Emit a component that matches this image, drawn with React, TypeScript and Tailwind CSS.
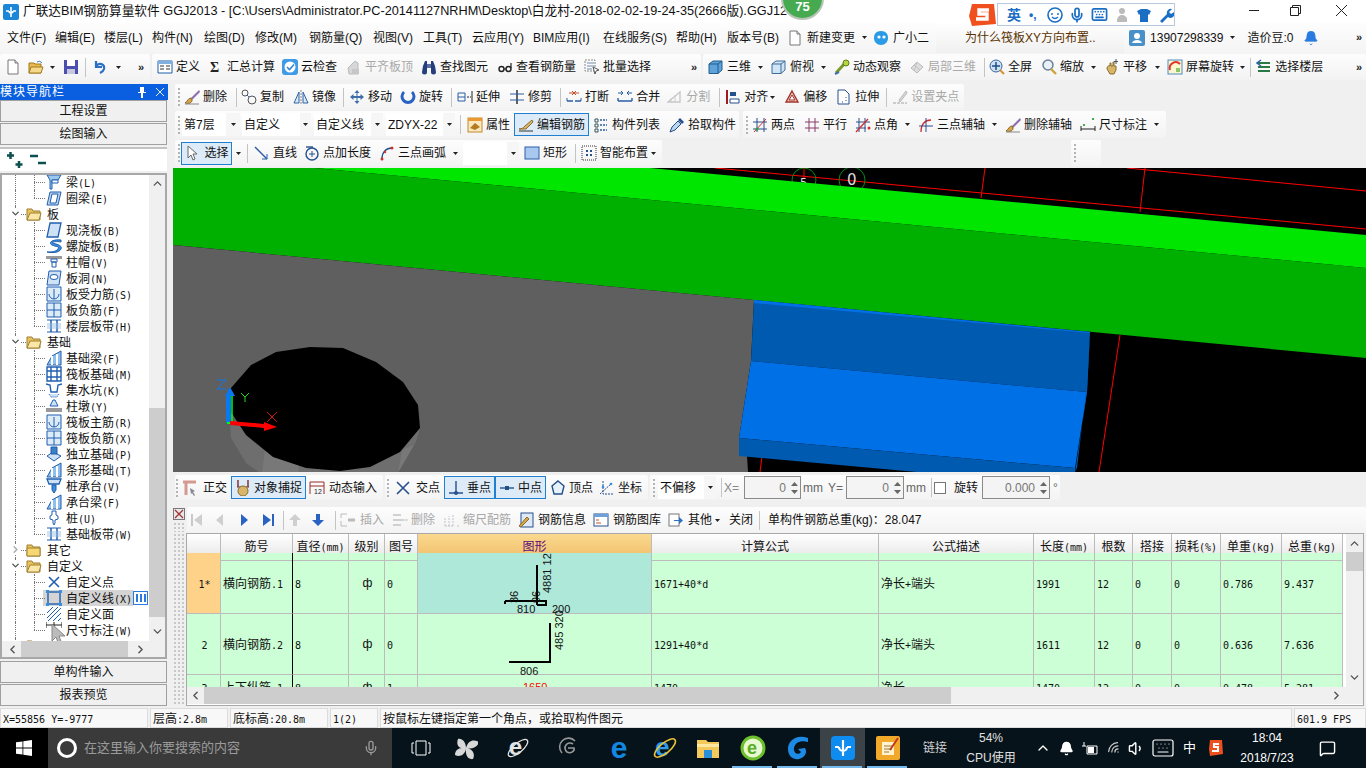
import React from 'react';
import clsx from 'clsx';
import { ChevronDown, ChevronLeft, ChevronRight, ChevronUp, Mic, Bell, Wifi, Volume1, Keyboard, MessageSquare } from 'lucide-react';

const sans = "[font-family:'Liberation_Sans','Noto_Sans_CJK_SC',sans-serif]";

// CJK runs at 12px with half-width latin next to them, like the app's bitmap font
const Sim = ({ t, className }: { t: string; className?: string }) => (
  <span className={clsx('whitespace-nowrap', className)}>
    {t.split(/([\u4e00-\u9fff，]+)/).filter(Boolean).map((p, i) =>
      /[\u4e00-\u9fff，]/.test(p)
        ? <span key={i} className="text-[12px]">{p}</span>
        : <span key={i} className="text-[10px] [font-family:'DejaVu_Sans_Mono',monospace]">{p}</span>
    )}
  </span>
);

const S = ({ children, w = 16, h = 16 }: { children: React.ReactNode; w?: number; h?: number }) => (
  <svg width={w} height={h} viewBox={`0 0 ${w} ${h}`} className="shrink-0">{children}</svg>
);

const icons: Record<string, React.ReactNode> = {
  file: <><path d="M3 1h7l3 3v11H3z" fill="#fff" stroke="#777" /><path d="M10 1v3h3" fill="#ddd" stroke="#777" /></>,
  open: <><path d="M1 4h5l1 1h6v9H1z" fill="#e8b94c" stroke="#a37a1e" /><path d="M3 8h12l-2 6H1z" fill="#f5d98a" stroke="#a37a1e" /><path d="M9 3q3-2 5 1" fill="none" stroke="#3a7fd0" /></>,
  save: <><path d="M1 1h14v14H1z" fill="#4a4fb0" /><path d="M4 1h8v6H4z" fill="#fff" /><path d="M4 10h8v5H4z" fill="#c8c8dc" /></>,
  undo: <path d="M4 2v6h6M4 7c3-4 9-2 8 3-.5 2-2 3-4 4" fill="none" stroke="#2a6fc4" strokeWidth="2.2" />,
  table: <><path d="M1 2h14v12H1z" fill="#fff" stroke="#1f5fa8" /><path d="M1 2h14v3H1z" fill="#7fb0e0" /><path d="M3 7h4M3 10h4M9 7h4M9 10h4" stroke="#333" /></>,
  sigma: <text x="2" y="13" fontSize="14" fontWeight="700" fontFamily="Liberation Serif" fill="#222">Σ</text>,
  cloud: <><rect x="0" y="0" width="16" height="16" rx="3" fill="#3f9be6" /><circle cx="8" cy="8" r="5.5" fill="#fff" /><path d="M5 8l2.5 2.5L12 5.5" fill="none" stroke="#2f86d6" strokeWidth="1.6" /></>,
  flat: <><path d="M2 9l7-7 3 2v11H3z" fill="#d6d6d6" stroke="#bbb" /><path d="M6 10h7v5H6z" fill="#c6c6c6" /></>,
  binoc: <><path d="M2 7l2-5h2v11a2.5 2.5 0 01-5 0zM14 7l-2-5h-2v11a2.5 2.5 0 005 0z" fill="#24407c" /><path d="M6 5h4v4H6z" fill="#5b6f9c" /></>,
  glasses: <><circle cx="4.5" cy="10" r="2.5" fill="none" stroke="#222" strokeWidth="1.4" /><circle cx="11.5" cy="10" r="2.5" fill="none" stroke="#222" strokeWidth="1.4" /><path d="M7 10h2M14 9V4" stroke="#222" strokeWidth="1.2" /></>,
  batch: <><path d="M1 1h10v11H1z" fill="none" stroke="#888" strokeDasharray="2 1" /><path d="M3 4h7M3 7h7M3 10h5" stroke="#6f8fb0" /><path d="M9 8l6 3-3 1-1 3z" fill="#fff" stroke="#555" /></>,
  cube: <><path d="M1 5l4-3h9v9l-4 3.5H1z" fill="#5da3d9" stroke="#235d8e" /><path d="M1 5h9v9.5M10 5l4-3" fill="none" stroke="#235d8e" /></>,
  cubeTop: <><path d="M1 5l4-3h9v9l-4 3.5H1z" fill="#cfe4f4" stroke="#406c98" /><path d="M1 5h9v9.5M10 5l4-3" fill="none" stroke="#406c98" /></>,
  orbit: <><path d="M2 14L12 3" stroke="#7a9a2a" strokeWidth="3" /><circle cx="12" cy="4" r="3" fill="#b7d63b" stroke="#5d7d1a" /><path d="M1 15l4-2" stroke="#3d70b0" strokeWidth="2" /></>,
  local: <><path d="M2 9l6-6 6 5-6 6z" fill="#ddd" stroke="#bbb" /><path d="M5 6l6 5M8 3l-3 9" stroke="#c4c4c4" /></>,
  full: <><circle cx="7" cy="7" r="6" fill="#cfe0f2" stroke="#37669c" /><path d="M7 3v8M3 7h8" stroke="#1d4d8a" strokeWidth="1.5" /><path d="M11 11l4 4" stroke="#d9902f" strokeWidth="2" /></>,
  zoom: <><circle cx="7" cy="6" r="5" fill="#e8f0f8" stroke="#6f8096" strokeWidth="1.5" /><path d="M10 10l5 5" stroke="#cfa23a" strokeWidth="2.4" /></>,
  pan: <><path d="M3 10c0-3 2-4 3-3V4h1v3h2V3h1v4h2v4l-2 4H6z" fill="#d9b56a" stroke="#8a6d2c" /><path d="M12 0v5M10 2.5h4" stroke="#456" /></>,
  rot: <><rect x="1" y="1" width="14" height="14" fill="#fdf7d0" stroke="#4d8bc4" /><path d="M3 11a6 6 0 0110-6" fill="none" stroke="#e0382c" strokeWidth="2" /><path d="M9 9h4v4H9z" fill="#8fc46a" /></>,
  floor: <><path d="M2 4h12M2 8h12M2 12h12" stroke="#2a7a46" strokeWidth="2" /><path d="M5 1L1 4l4 3" fill="none" stroke="#2a5fb0" strokeWidth="1.4" /></>,
  brush: <><path d="M15 1L7 9l1 2 8-8z" fill="#8c6fb0" /><path d="M7 9c-3 0-3 3-6 5 4 1 7 0 7-3z" fill="#d8a54a" stroke="#8a6a24" /><path d="M1 15h14" stroke="#888" /></>,
  copy: <><circle cx="4" cy="4" r="3" fill="none" stroke="#555" /><circle cx="11" cy="11" r="4" fill="none" stroke="#555" /><path d="M6 6l2 2" stroke="#2a6fc4" /></>,
  mirror: <><path d="M8 1v14" stroke="#888" strokeDasharray="2 1" /><path d="M6 3v11H1zM10 3v11h5z" fill="#dbe9f5" stroke="#2f64a6" /></>,
  move: <path d="M8 1l2.5 3h-2v3h3v-2L15 8l-3.5 3V9h-3v3h2L8 15l-2.5-3h2V9h-3v2L1 8l3.5-3v2h3V4h-2z" fill="#3e6ea8" />,
  rotate: <path d="M4 3a6 6 0 108 0" fill="none" stroke="#2a62c4" strokeWidth="3" />,
  extend: <><path d="M1 4h7v8H1z" fill="none" stroke="#2a5fa8" /><path d="M8 8H1" stroke="#2a5fa8" /><path d="M10 8h2M13 8h1M15 2v12" stroke="#222" /></>,
  trim: <><path d="M8 1v14" stroke="#222" strokeWidth="1.4" /><path d="M1 5h14M1 11h14" stroke="#2a5fa8" /></>,
  brk: <><path d="M1 12h6M9 12h6" stroke="#2a5fa8" strokeWidth="1.4" /><path d="M1 12V9M15 12V9" stroke="#2a5fa8" /><path d="M3 4h4M6 2l2 2-2 2M13 4H9M10 2L8 4l2 2" fill="none" stroke="#c8502a" /></>,
  merge: <><path d="M1 12h14M1 12V9M15 12V9" stroke="#2a5fa8" strokeWidth="1.4" fill="none" /><path d="M1 4h5M4 2l2 2-2 2M15 4h-5M12 2l-2 2 2 2" fill="none" stroke="#2a5fa8" /></>,
  split: <><path d="M1 13L13 3v10z" fill="none" stroke="#c8c8c8" strokeWidth="1.4" /><path d="M4 13V9M8 13V6" stroke="#ccc" /></>,
  align: <><path d="M2 1v14" stroke="#a01c1c" strokeWidth="2" /><path d="M5 3h6v4H5z" fill="#24508c" /><path d="M5 10h9v4H5z" fill="#fff" stroke="#24508c" /></>,
  offset: <><path d="M8 2l6 11H2z" fill="#f4c8c0" stroke="#a0342c" strokeWidth="1.4" /><path d="M8 6l3 5H5z" fill="#fff" stroke="#a0342c" /></>,
  stretch: <><path d="M2 1h7l4 4v10H2z" fill="#fff" stroke="#24508c" /><path d="M10 8v1M10 11v1M6 13h1" stroke="#24508c" /></>,
  grip: <><path d="M1 14h14" stroke="#ccc" strokeWidth="2" strokeDasharray="3 1" /><path d="M7 11l7-9 1 2-7 9z" fill="#d4d4d4" stroke="#bbb" /></>,
  props: <><rect x="1" y="1" width="14" height="14" fill="#fbe7c0" stroke="#c28a2a" /><path d="M1 1h14v3H1z" fill="#e89a30" /><path d="M3 11l5-5 5 4-5 3z" fill="#b57b20" /></>,
  edit: <><path d="M1 12c3 0 4-1 6-3l7-6 1 2-7 7H2z" fill="#d9b56a" stroke="#8a6d2c" /><path d="M1 14h14" stroke="#333" /></>,
  list: <><path d="M2 2h3v3H2zM2 7h3v3H2zM2 12h3v3H2z" fill="#fff" stroke="#355" /><path d="M7 3h7M7 8h7M7 13h7" stroke="#2a5fa8" strokeWidth="1.5" strokeDasharray="2 1" /></>,
  pick: <><path d="M1 15l2-5 6-6 3 3-6 6z" fill="#bcd6ee" stroke="#24508c" /><path d="M9 3l2-2 4 4-2 2z" fill="#24508c" /></>,
  twoPt: <><path d="M5 1v14M12 1v14M1 5h14M1 12h14" stroke="#2a4f8c" /><path d="M2 15L14 2" stroke="#d0302c" /><circle cx="5" cy="12" r="1.5" fill="#2f9e3a" /></>,
  para: <path d="M5 1v14M11 1v14M1 5h14M1 11h14" stroke="#8a3a6a" fill="none" />,
  ang: <><path d="M4 1v14M10 1v14M1 5h14M1 11h10" stroke="#2a4f8c" /><path d="M1 15L13 2" stroke="#d0302c" strokeWidth="1.3" /><circle cx="14" cy="11" r="1.5" fill="#d0302c" /></>,
  arcAx: <><path d="M3 15C3 7 7 3 13 3" fill="none" stroke="#d0302c" strokeWidth="1.3" /><path d="M8 1v14M1 9h14" stroke="#2a4f8c" /></>,
  dim: <><path d="M1 9v5M15 9v5M1 12h14" stroke="#222" /><rect x="3" y="7" width="2" height="2" fill="#3fae49" /><rect x="12" y="1" width="2" height="2" fill="#3fae49" /></>,
  cursor: <path d="M4 1v12l3-3 2 5 2-1-2-5h4z" fill="#fff" stroke="#666" />,
  line: <><path d="M1 2l12 12" stroke="#2a5fa8" strokeWidth="1.4" /><path d="M13 9v5H8" fill="none" stroke="#2a5fa8" /></>,
  addLen: <><circle cx="8" cy="9" r="6" fill="none" stroke="#24508c" strokeWidth="1.4" /><path d="M8 6v6M5 9h6" stroke="#24508c" /><path d="M2 2h7" stroke="#24508c" strokeWidth="1.4" /></>,
  arc: <><path d="M3 14C3 7 7 3 13 3" fill="none" stroke="#24508c" strokeWidth="1.4" /><circle cx="3" cy="14" r="1.5" fill="#d0302c" /><circle cx="13" cy="3" r="1.5" fill="#d0302c" /><circle cx="6" cy="7" r="1.2" fill="#d0302c" /></>,
  rect: <rect x="1" y="2" width="14" height="12" fill="#a8c8f0" stroke="#2a5fa8" />,
  smart: <><path d="M1 1h14v14H1z" fill="none" stroke="#333" strokeDasharray="1 1" /><path d="M5 5h2v2H5zM9 9h2v2H9zM9 5h2v2H9zM5 9h2v2H5z" fill="#24508c" /></>,
  ortho: <><path d="M1 2h13" stroke="#d49a90" strokeWidth="3" /><path d="M4 2v13" stroke="#d49a90" strokeWidth="3" /><path d="M8 8l5 3-2 1 2 3-1 1-2-3-1 1z" fill="#889" /></>,
  snap: <><path d="M3 0v7M13 0v7" stroke="#7a2a2a" strokeWidth="1.4" /><path d="M2 7h12" stroke="#7a2a2a" /><circle cx="8" cy="11" r="5" fill="#d9b56a" stroke="#8a6d2c" /></>,
  dyn: <><path d="M1 2h14M1 6h14M1 2v12M15 2v12" stroke="#9a2a2a" fill="none" /><text x="5" y="14" fontSize="7" fontFamily="Liberation Sans" fill="#222">12</text></>,
  cross: <path d="M2 2l12 12M14 2L2 14" stroke="#24508c" strokeWidth="1.6" />,
  perp: <><path d="M8 1v12M1 13h14" stroke="#24508c" strokeWidth="1.4" /><circle cx="8" cy="13" r="2" fill="#24508c" /></>,
  mid: <><path d="M1 8h14" stroke="#24508c" strokeWidth="1.4" /><rect x="6" y="6" width="4" height="4" fill="#24508c" /></>,
  vert: <path d="M8 1l6 5-2 8H4L2 6z" fill="#e8f2fb" stroke="#24508c" strokeWidth="1.4" />,
  coord: <><path d="M4 1v13h11" fill="none" stroke="#24508c" strokeDasharray="2 1" /><path d="M1 14L13 3" stroke="#24508c" strokeDasharray="2 1" /><circle cx="4" cy="7" r="1.3" fill="#3a8ee0" /><circle cx="12" cy="4" r="1.3" fill="#3a8ee0" /></>,
  navFirst: <><path d="M3 2v12" stroke="#c8c8c8" strokeWidth="2" /><path d="M13 2L5 8l8 6z" fill="#cfcfcf" /></>,
  navPrev: <path d="M11 2L4 8l7 6z" fill="#cfcfcf" />,
  navNext: <path d="M5 2l7 6-7 6z" fill="#2a62c4" />,
  navLast: <><path d="M13 2v12" stroke="#2a62c4" strokeWidth="2" /><path d="M3 2l8 6-8 6z" fill="#2a62c4" /></>,
  up: <path d="M8 2l6 6h-4v6H6V8H2z" fill="#cfcfcf" />,
  down: <path d="M8 14l6-6h-4V2H6v6H2z" fill="#2a62c4" />,
  ins: <><path d="M1 2h6M1 2v4M1 9v5h6" stroke="#bbb" fill="none" /><path d="M8 8h7" stroke="#bbb" strokeWidth="3" /></>,
  del: <><path d="M1 3h8M1 8h10M1 13h8" stroke="#c4c4c4" strokeWidth="1.5" /><path d="M11 8h5" stroke="#c4c4c4" /></>,
  scale: <path d="M1 14V6M5 14V4M9 14V2M13 14h2M1 14h8" stroke="#c4c4c4" strokeDasharray="2 1" fill="none" />,
  info: <><rect x="3" y="1" width="12" height="14" fill="#dfe9f5" stroke="#24508c" /><path d="M1 14l8-9 2 2-8 8z" fill="#d9a54a" stroke="#8a6d2c" /></>,
  lib: <><rect x="1" y="2" width="14" height="12" fill="#fff" stroke="#24508c" /><path d="M1 2h14v3H1z" fill="#6d9fd8" /><path d="M3 8h3M3 11h5" stroke="#c8502a" /></>,
  other: <><rect x="1" y="2" width="10" height="12" fill="#fff" stroke="#777" /><path d="M6 8h5V5l4 3.5-4 3.5V9H6z" fill="#2a72c8" /></>,
};

const Ic = ({ n }: { n: string }) => <S>{icons[n]}</S>;

const Caret = ({ className }: { className?: string }) => (
  <svg width="5" height="3" viewBox="0 0 5 3" className={clsx('shrink-0', className)}><path d="M0 0h5L2.5 3z" fill="#222" /></svg>
);

const Sep = ({ className }: { className?: string }) => <div className={clsx('h-[19px] w-px shrink-0 bg-[#c4c4c4]', className)} />;

const Grip = ({ className }: { className?: string }) => (
  <div className={clsx('flex shrink-0 flex-col gap-[2px]', className)}>
    {[0, 1, 2, 3, 4].map(i => <span key={i} className="h-[2px] w-[2px] bg-[#b4b4b4]" />)}
  </div>
);

const Tool = ({ n, label, gray, className }: { n: string; label: string; gray?: boolean; className?: string }) => (
  <div className={clsx('flex shrink-0 items-center gap-[3px]', className)}>
    <Ic n={n} />
    <span className={clsx('whitespace-nowrap text-[12px]', gray ? 'text-[#a8a8a8]' : 'text-[#111]')}>{label}</span>
  </div>
);

const Bar = ({ children, className }: { children: React.ReactNode; className?: string }) => (
  <div className={clsx('flex h-full shrink-0 items-center rounded-[2px] bg-gradient-to-b from-[#fdfdfd] to-[#f3f3f3]', className)}>{children}</div>
);

const Combo = ({ t, w, c, className }: { t: string; w: string; c: string; className?: string }) => (
  <div className={clsx('flex h-[23px] shrink-0 items-center', className)}>
    <div className={clsx('flex h-full items-center bg-white pl-[2px] text-[12px]', w)}>{t}</div>
    <div className={clsx('flex h-full items-center justify-center bg-[#f6f6f6]', c)}><Caret /></div>
  </div>
);

const Spin = ({ v, w, className }: { v: string; w: string; className?: string }) => (
  <div className={clsx('flex h-[23px] shrink-0 items-center justify-end border border-[#8a8a8a] bg-[#f4f4f4] text-[12px] text-[#777]', w, className)}>
    <span>{v}</span>
    <div className="ml-[5px] mr-[2px] flex flex-col gap-[4px]">
      <svg width="7" height="4" viewBox="0 0 7 4"><path d="M3.5 0L7 4H0z" fill="#666" /></svg>
      <svg width="7" height="4" viewBox="0 0 7 4"><path d="M3.5 4L7 0H0z" fill="#666" /></svg>
    </div>
  </div>
);

const Chevrons = ({ className }: { className?: string }) => <span className={clsx('text-[11px] font-bold leading-none text-[#222]', className)}>»</span>;

const TitleBar = () => (
  <div className="relative flex h-[23px] items-center bg-white">
    <svg width="16" height="16" viewBox="0 0 16 16" className="ml-[3px] shrink-0">
      <rect width="16" height="16" rx="2" fill="#1c86d8" />
      <path d="M8 3v7M3 7h3M10 7h3M6 7a2 2 0 104 0M8 10v3" fill="none" stroke="#fff" strokeWidth="1.6" />
    </svg>
    <span className="ml-[4px] whitespace-nowrap text-[12.7px] text-[#111]">广联达BIM钢筋算量软件 GGJ2013 - [C:\Users\Administrator.PC-20141127NRHM\Desktop\白龙村-2018-02-02-19-24-35(2666版).GGJ12</span>
    <div className="absolute left-[781px] top-[-23px] flex h-[43px] w-[43px] items-end justify-center rounded-full border-2 border-[#b8c4b8] bg-[#46ab50] pb-[5px] text-[13px] font-bold leading-none text-white">75</div>
    <svg width="30" height="24" viewBox="0 0 30 24" className="absolute left-[968px] top-[3px]">
      <path d="M4 1h22l2 20-24 2-3-10z" fill="#f0501e" />
      <path d="M21 7H11v4h8v5H8" fill="none" stroke="#fff" strokeWidth="3.4" />
    </svg>
    <div className="absolute left-[997px] top-[3px] flex h-[23px] w-[178px] items-center border border-[#b9c9dd] bg-white">
      <span className="ml-[9px] text-[14px] font-bold leading-none text-[#1a6fc4]">英</span>
      <span className="ml-[8px] text-[12px] font-bold leading-none text-[#1a6fc4]">•,</span>
      <svg width="16" height="16" viewBox="0 0 16 16" className="ml-[10px]"><circle cx="8" cy="8" r="7" fill="none" stroke="#1a6fc4" strokeWidth="1.6" /><path d="M5 6v2M11 6v2M5 10q3 3 6 0" fill="none" stroke="#1a6fc4" strokeWidth="1.4" /></svg>
      <Mic size={16} strokeWidth={2.6} className="ml-[6px] text-[#1a6fc4]" />
      <Keyboard size={17} strokeWidth={2.4} className="ml-[6px] text-[#1a6fc4]" />
      <svg width="16" height="16" viewBox="0 0 16 16" className="ml-[7px]"><circle cx="7" cy="4" r="3" fill="#bbb" /><path d="M2 15c0-5 2-7 5-7s4 2 5 3v4z" fill="#bbb" /></svg>
      <svg width="16" height="16" viewBox="0 0 16 16" className="ml-[5px]"><path d="M1 4l4-2h6l4 2-2 4-1-1v8H4V7L3 8z" fill="#1a6fc4" /></svg>
      <svg width="16" height="16" viewBox="0 0 16 16" className="ml-[6px]"><path d="M2 14l7-7a4 4 0 015-5l-3 3 2 2 3-2a4 4 0 01-6 5l-6 6z" fill="#1a6fc4" /></svg>
    </div>
    <div className="absolute left-[1249px] top-[10px] h-px w-[10px] bg-[#222]" />
    <svg width="11" height="11" viewBox="0 0 11 11" className="absolute left-[1290px] top-[5px]"><path d="M.5 2.5h8v8h-8zM2.5 2.5v-2h8v8h-2" fill="none" stroke="#222" /></svg>
    <svg width="11" height="11" viewBox="0 0 11 11" className="absolute left-[1336px] top-[5px]"><path d="M0 0l11 11M11 0L0 11" stroke="#222" /></svg>
  </div>
);

const menus = [
  ['文件(F)', 'w-[48px]'], ['编辑(E)', 'w-[49px]'], ['楼层(L)', 'w-[48px]'], ['构件(N)', 'w-[52px]'], ['绘图(D)', 'w-[51px]'],
  ['修改(M)', 'w-[54px]'], ['钢筋量(Q)', 'w-[64px]'], ['视图(V)', 'w-[50px]'], ['工具(T)', 'w-[49px]'], ['云应用(Y)', 'w-[61px]'],
  ['BIM应用(I)', 'w-[70px]'], ['在线服务(S)', 'w-[73px]'], ['帮助(H)', 'w-[51px]'], ['版本号(B)', 'w-[60px]'],
];

const MenuBar = () => (
  <div className="flex h-[31px] items-center bg-gradient-to-b from-[#fdfdfd] to-[#f4f4f4] pb-[2px] pl-[7px] text-[12px] text-[#111]">
    {menus.map(([m, w]) => <span key={m} className={clsx('shrink-0 whitespace-nowrap', w)}>{m}</span>)}
    <Tool n="file" label="新建变更" className="gap-[4px]" />
    <Caret className="ml-[7px]" />
    <svg width="17" height="16" viewBox="0 0 17 16" className="ml-[6px] shrink-0"><path d="M8 1c5 0 7 3 7 7s-3 7-7 7-7-3-7-7 2-7 7-7z" fill="#2a9be6" /><circle cx="6" cy="7" r="1.6" fill="#fff" /><circle cx="11" cy="7" r="1.6" fill="#fff" /></svg>
    <span className="ml-[3px]">广小二</span>
    <div className="ml-[7px] flex h-[31px] w-[188px] shrink-0 items-center rounded-t-[3px] bg-gradient-to-b from-[#ffffff] to-[#f0f0f0] pl-[29px] text-[#5a3200]">为什么筏板XY方向布置..</div>
    <svg width="16" height="16" viewBox="0 0 16 16" className="ml-[5px] shrink-0"><rect width="16" height="16" rx="2" fill="#4a90c8" /><circle cx="8" cy="6" r="3" fill="#fff" /><path d="M3 13c1-4 9-4 10 0z" fill="#fff" /></svg>
    <span className="ml-[5px]">13907298339</span>
    <Caret className="ml-[7px]" />
    <span className="ml-[12px]">造价豆:0</span>
    <Bell size={16} fill="#2a7be0" strokeWidth={1} className="ml-[10px] text-[#2a7be0]" />
    <Chevrons className="ml-auto mr-[4px]" />
  </div>
);

const TopTools = () => (
  <div className="flex h-[30px] pb-[4px]">
    <Bar className="w-[150px]">
      <div className="ml-[5px]"><Ic n="file" /></div>
      <div className="ml-[7px]"><Ic n="open" /></div>
      <Caret className="ml-[6px]" />
      <div className="ml-[8px]"><Ic n="save" /></div>
      <Sep className="ml-[6px]" />
      <div className="ml-[6px]"><Ic n="undo" /></div>
      <Caret className="ml-[8px]" />
      <Chevrons className="ml-[17px]" />
    </Bar>
    <Bar className="ml-[2px] w-[549px]">
      <Tool n="table" label="定义" className="ml-[5px]" />
      <Tool n="sigma" label="汇总计算" className="ml-[8px]" />
      <Tool n="cloud" label="云检查" className="ml-[7px]" />
      <Tool n="flat" label="平齐板顶" gray className="ml-[9px]" />
      <Tool n="binoc" label="查找图元" className="ml-[8px]" />
      <Tool n="glasses" label="查看钢筋量" className="ml-[9px]" />
      <Tool n="batch" label="批量选择" className="ml-[8px]" />
      <Chevrons className="ml-auto mr-[4px]" />
    </Bar>
    <Bar className="ml-[2px] flex-1">
      <Tool n="cube" label="三维" className="ml-[5px]" />
      <Caret className="ml-[7px]" />
      <Tool n="cubeTop" label="俯视" className="ml-[8px]" />
      <Caret className="ml-[7px]" />
      <Tool n="orbit" label="动态观察" className="ml-[8px]" />
      <Tool n="local" label="局部三维" gray className="ml-[8px]" />
      <Sep className="ml-[8px]" />
      <Tool n="full" label="全屏" className="ml-[4px]" />
      <Tool n="zoom" label="缩放" className="ml-[9px]" />
      <Caret className="ml-[7px]" />
      <Tool n="pan" label="平移" className="ml-[8px]" />
      <Caret className="ml-[8px]" />
      <Tool n="rot" label="屏幕旋转" className="ml-[7px]" />
      <Caret className="ml-[6px]" />
      <Sep className="ml-[5px]" />
      <Tool n="floor" label="选择楼层" className="ml-[5px]" />
      <Chevrons className="ml-auto mr-[4px]" />
    </Bar>
  </div>
);

const Row2 = () => (
  <div className="flex h-[26px]">
    <Bar className="ml-[2px] w-[789px]">
      <Grip className="ml-[3px]" />
      <Tool n="brush" label="删除" className="ml-[4px]" />
      <Sep className="ml-[9px]" />
      <Tool n="copy" label="复制" className="ml-[4px]" />
      <Tool n="mirror" label="镜像" className="ml-[9px]" />
      <Sep className="ml-[7px]" />
      <Tool n="move" label="移动" className="ml-[5px]" />
      <Tool n="rotate" label="旋转" className="ml-[8px]" />
      <Sep className="ml-[8px]" />
      <Tool n="extend" label="延伸" className="ml-[5px]" />
      <Tool n="trim" label="修剪" className="ml-[9px]" />
      <Sep className="ml-[8px]" />
      <Tool n="brk" label="打断" className="ml-[5px]" />
      <Tool n="merge" label="合并" className="ml-[8px]" />
      <Tool n="split" label="分割" gray className="ml-[7px]" />
      <Sep className="ml-[9px]" />
      <Tool n="align" label="对齐" className="ml-[5px]" />
      <Caret className="ml-[2px]" />
      <Tool n="offset" label="偏移" className="ml-[9px]" />
      <Tool n="stretch" label="拉伸" className="ml-[9px]" />
      <Sep className="ml-[7px]" />
      <Tool n="grip" label="设置夹点" gray className="ml-[5px]" />
    </Bar>
  </div>
);

const Row3 = () => (
  <div className="mt-px flex h-[27px]">
    <Bar className="ml-[2px] w-[564px]">
      <Grip className="ml-[3px]" />
      <Combo t="第7层" w="w-[44px]" c="w-[14px]" className="ml-[2px]" />
      <Combo t="自定义" w="w-[58px]" c="w-[11px]" className="ml-[2px]" />
      <Combo t="自定义线" w="w-[57px]" c="w-[12px]" className="ml-[3px]" />
      <Combo t="ZDYX-22" w="w-[57px]" c="w-[12px]" className="ml-[3px]" />
      <Sep className="ml-[5px]" />
      <Tool n="props" label="属性" className="ml-[6px]" />
      <div className="ml-[4px] flex h-[23px] w-[75px] shrink-0 items-center justify-center border border-[#1f7fd0] bg-[#dcebf7]"><Tool n="edit" label="编辑钢筋" className="gap-[2px]" /></div>
      <Tool n="list" label="构件列表" className="ml-[4px]" />
      <Tool n="pick" label="拾取构件" className="ml-[9px]" />
    </Bar>
    <Bar className="ml-[4px] w-[423px]">
      <Grip className="ml-[3px]" />
      <Tool n="twoPt" label="两点" className="ml-[4px]" />
      <Tool n="para" label="平行" className="ml-[9px]" />
      <Tool n="ang" label="点角" className="ml-[8px]" />
      <Caret className="ml-[7px]" />
      <Tool n="arcAx" label="三点辅轴" className="ml-[8px]" />
      <Caret className="ml-[7px]" />
      <Tool n="brush" label="删除辅轴" className="ml-[8px]" />
      <Tool n="dim" label="尺寸标注" className="ml-[8px]" />
      <Caret className="ml-[7px]" />
    </Bar>
  </div>
);

const Row4 = () => (
  <div className="mt-[2px] flex h-[26px]">
    <Bar className="ml-[2px] w-[487px]">
      <Grip className="ml-[3px]" />
      <div className="ml-[1px] flex h-[23px] w-[51px] shrink-0 items-center justify-center border border-[#1f7fd0] bg-[#dcebf7]"><Tool n="cursor" label="选择" className="gap-[4px]" /></div>
      <Caret className="ml-[4px]" />
      <Sep className="ml-[6px]" />
      <Tool n="line" label="直线" className="ml-[6px]" />
      <Tool n="addLen" label="点加长度" className="ml-[7px]" />
      <Tool n="arc" label="三点画弧" className="ml-[8px]" />
      <Caret className="ml-[7px]" />
      <Combo t="" w="w-[44px]" c="w-[12px]" className="ml-[5px]" />
      <Tool n="rect" label="矩形" className="ml-[5px]" />
      <Sep className="ml-[8px]" />
      <Tool n="smart" label="智能布置" className="ml-[5px]" />
      <Caret className="ml-[3px]" />
    </Bar>
    <Bar className="ml-[409px] w-[30px]"><Grip className="ml-[3px]" /></Bar>
  </div>
);

const Canvas = () => (
  <div className="mt-[2px] h-[304px] bg-black">
    <svg width="1193" height="304" viewBox="173 168 1193 304" className="block">
      <g stroke="#f00" strokeWidth="1" fill="none">
        <path d="M715 168L1366 229M1127 168L1366 191M985 168L981 198M1145 168L1140 212M1120 335L1099 472M762 456L760 472" />
      </g>
      <g fill="none" stroke="#0a8a12">
        <circle cx="804" cy="180" r="12" />
        <circle cx="852" cy="180" r="13" />
      </g>
      <path d="M804 168v10" stroke="#f00" />
      <text x="800" y="186" fontSize="11" fill="#ddd" fontFamily="DejaVu Sans">5</text>
      <text x="847" y="185" fontSize="15" fill="#ddd" fontFamily="DejaVu Sans">0</text>
      <path d="M315 168L650 168L1366 235V268z" fill="#00e600" />
      <path d="M173 168H315L1366 268V358L173 245z" fill="#00b000" />
      <path d="M173 245L754 300L751 361L739 438L739 456L747 456L748 472H173z" fill="#5f5f5f" />
      <path d="M754 300L1090 332L1087 392L751 361z" fill="#005ab0" />
      <path d="M754 300L1090 332V333L754 303z" fill="#0070e6" />
      <path d="M751 361L1087 392L1075 468L739 438z" fill="#0070e6" />
      <path d="M739 438L1075 468V472H917L739 456z" fill="#005ab0" />
      <path d="M1090 332L1087 392L1075 472L1077 468L1086 392z" fill="#005ab0" />
      <path d="M230 425L231 438L246 463L260 473H397L416 442L420 428L300 400z" fill="#6e6e6e" />
      <path d="M262 473L265 450L300 460L298 473zM398 473L402 450L414 445z" fill="#787878" />
      <path d="M310 347L343 348L376 362L403 382L418 405L420 428L400 452L370 467L340 471L306 468L273 457L246 435L231 412L231 388L251 365L276 352z" fill="#000" />
      <path d="M226 423V396h-1L230 387l5 9h-4V423z" fill="#0a78f0" />
      <path d="M232 422V396" stroke="#00ff00" strokeWidth="1.500" />
      <path d="M227 423h4" stroke="#00ff00" strokeWidth="2" />
      <path d="M230 421L264 424V422L277 427L264 431V428L230 425z" fill="#f00" />
      <path d="M217 380h9l-9 9h9" fill="none" stroke="#0a78f0" />
      <path d="M241 393l4 4 4-4M245 397v5" fill="none" stroke="#20e020" />
      <path d="M267 412l10 10M277 412l-10 10" stroke="#d01818" />
    </svg>
  </div>
);

const Row5 = () => (
  <div className="mt-[3px] flex h-[25px]">
    <Bar className="ml-[2px] w-[208px]">
      <Grip className="ml-[1px]" />
      <Tool n="ortho" label="正交" className="ml-[4px] gap-[5px]" />
      <div className="ml-[4px] flex h-[23px] w-[75px] shrink-0 items-center justify-center border border-[#1f7fd0] bg-[#dcebf7]"><Tool n="snap" label="对象捕捉" className="gap-[3px]" /></div>
      <Tool n="dyn" label="动态输入" className="ml-[3px] gap-[4px]" />
    </Bar>
    <Bar className="ml-[2px] w-[263px]">
      <Grip className="ml-[2px]" />
      <Tool n="cross" label="交点" className="ml-[6px] gap-[5px]" />
      <div className="ml-[4px] flex h-[23px] w-[51px] shrink-0 items-center justify-center border border-[#1f7fd0] bg-[#dcebf7]"><Tool n="perp" label="垂点" /></div>
      <div className="flex h-[23px] w-[51px] shrink-0 items-center justify-center border border-[#1f7fd0] bg-[#dcebf7]"><Tool n="mid" label="中点" /></div>
      <Tool n="vert" label="顶点" className="ml-[4px]" />
      <Tool n="coord" label="坐标" className="ml-[6px]" />
    </Bar>
    <Bar className="ml-[2px] w-[410px] text-[12px]">
      <Grip className="ml-[3px]" />
      <Combo t="不偏移" w="w-[46px]" c="w-[12px]" className="ml-[3px]" />
      <Sep className="ml-[5px]" />
      <span className="ml-[2px] text-[#888]">X=</span>
      <Spin v="0" w="w-[57px]" className="ml-[5px]" />
      <span className="ml-[2px] text-[#666]">mm</span>
      <span className="ml-[5px] text-[#666]">Y=</span>
      <Spin v="0" w="w-[58px]" className="ml-[3px]" />
      <span className="ml-[2px] text-[#666]">mm</span>
      <Sep className="ml-[5px]" />
      <span className="ml-[2px] h-[12px] w-[12px] shrink-0 border border-[#777] bg-white" />
      <span className="ml-[8px]">旋转</span>
      <Spin v="0.000" w="w-[68px]" className="ml-[4px]" />
      <span className="ml-[3px] text-[#666]">°</span>
    </Bar>
  </div>
);

const Row6 = () => (
  <div className="mt-[7px] flex h-[26px]">
    <div className="h-full w-[14px] shrink-0 pt-[1px]">
      <svg width="12" height="12" viewBox="0 0 12 12"><rect x=".5" y=".5" width="11" height="11" fill="#e8e8e8" stroke="#777" /><path d="M2 2l8 8M10 2l-8 8" stroke="#a03030" strokeWidth="1.200" /></svg>
      <div className="mt-[2px] h-[10px] w-[13px] bg-[radial-gradient(#c8c8c8_1px,transparent_1px)] bg-[size:4px_4px]" />
    </div>
    <Bar className="flex-1">
      <div className="ml-[2px]"><Ic n="navFirst" /></div>
      <div className="ml-[7px]"><Ic n="navPrev" /></div>
      <div className="ml-[8px]"><Ic n="navNext" /></div>
      <div className="ml-[8px]"><Ic n="navLast" /></div>
      <Sep className="ml-[7px]" />
      <div className="ml-[3px]"><Ic n="up" /></div>
      <div className="ml-[7px]"><Ic n="down" /></div>
      <Sep className="ml-[9px]" />
      <Tool n="ins" label="插入" gray className="ml-[4px] gap-[4px]" />
      <Tool n="del" label="删除" gray className="ml-[8px]" />
      <Tool n="scale" label="缩尺配筋" gray className="ml-[9px] gap-[2px]" />
      <Tool n="info" label="钢筋信息" className="ml-[7px] gap-[4px]" />
      <Tool n="lib" label="钢筋图库" className="ml-[7px] gap-[4px]" />
      <Tool n="other" label="其他" className="ml-[7px] gap-[4px]" />
      <Caret className="ml-[3px]" />
      <span className="ml-[9px] text-[12px]">关闭</span>
      <Sep className="ml-[6px]" />
      <span className="ml-[8px] text-[12px]">单构件钢筋总重(kg)：28.047</span>
    </Bar>
  </div>
);

const cols = 'grid grid-cols-[34px_72px_56px_36px_33px_234px_227px_155px_61px_38px_39px_49px_61px_61px]';
const heads = ['', '筋号', '直径(mm)', '级别', '图号', '图形', '计算公式', '公式描述', '长度(mm)', '根数', '搭接', '损耗(%)', '单重(kg)', '总重(kg)'];
const rows = [
  { h: 'h-[61px]', no: '1*', name: '横向钢筋.1', d: '8', fig: '0', f: '1671+40*d', desc: '净长+端头', len: '1991', n: '12', lap: '0', loss: '0', w: '0.786', tw: '9.437' },
  { h: 'h-[61px]', no: '2', name: '横向钢筋.2', d: '8', fig: '0', f: '1291+40*d', desc: '净长+端头', len: '1611', n: '12', lap: '0', loss: '0', w: '0.636', tw: '7.636' },
  { h: 'h-[24px]', no: '3', name: '上下纵筋.1', d: '8', fig: '1', f: '1470', desc: '净长', len: '1470', n: '12', lap: '0', loss: '0', w: '0.478', tw: '5.281' },
];

const Cell = ({ children, className }: { children?: React.ReactNode; className?: string }) => (
  <div className={clsx('flex items-center overflow-hidden border-b border-r border-[#bcbcbc] pl-[2px] text-[#111]', className)}>{children}</div>
);

const Grade = () => <span className="text-[12px] leading-none">ф</span>;

const RebarTable = () => (
  <div className="flex">
    <div className="h-[173px] w-[13px] shrink-0 bg-[radial-gradient(#c8c8c8_1px,transparent_1px)] bg-[size:4px_4px]" />
    <div className="flex h-[173px] w-[1178px] flex-col border border-[#a8a8a8] bg-white">
      <div className="flex h-[153px] min-h-0">
        <div className="relative w-[1156px] overflow-hidden">
          <div className={clsx(cols, 'h-[19px] bg-gradient-to-b from-white to-[#ececec]')}>
            {heads.map((h, i) => (
              <div key={i} className={clsx('flex items-center justify-center border-b border-r border-[#bcbcbc] pb-[2px]', i === 5 && 'bg-gradient-to-b from-[#fad98e] to-[#f0bd68] text-[#5f0a78]')}>
                <Sim t={h} />
              </div>
            ))}
          </div>
          {rows.map((r, i) => (
            <div key={i} className={clsx(cols, r.h, 'bg-[#ccffd6]')}>
              <Cell className={clsx('justify-center pl-0', i === 0 && 'bg-[#ffd28a] text-[#5f0a78]')}><Sim t={r.no} /></Cell>
              <Cell className="border-r-black"><Sim t={r.name} /></Cell>
              <Cell><Sim t={r.d} /></Cell>
              <Cell className="justify-center pl-0"><Grade /></Cell>
              <Cell><Sim t={r.fig} /></Cell>
              <Cell className={clsx(i === 0 && 'bg-[#aee8d8]')} />
              <Cell><Sim t={r.f} /></Cell>
              <Cell><Sim t={r.desc} /></Cell>
              <Cell><Sim t={r.len} /></Cell>
              <Cell><Sim t={r.n} /></Cell>
              <Cell><Sim t={r.lap} /></Cell>
              <Cell><Sim t={r.loss} /></Cell>
              <Cell><Sim t={r.w} /></Cell>
              <Cell><Sim t={r.tw} /></Cell>
            </div>
          ))}
          <svg width="234" height="134" viewBox="417 553 234 134" className="absolute left-[230px] top-[19px]">
            <g stroke="#000" fill="none">
              <path d="M537 565V605M505 601H547M505 601v3M537 605h9v-4M550 623V662H509" strokeWidth="2" />
            </g>
            <g fontFamily="Liberation Sans" fontSize="11" fill="#111">
              <text x="517" y="613">810</text>
              <text x="552" y="613">200</text>
              <text x="520" y="675">806</text>
              <text x="0" y="0" transform="translate(518 603) rotate(-90)">36</text>
              <text x="0" y="0" transform="translate(540 603) rotate(-90)">96</text>
              <text x="0" y="0" transform="translate(551 593) rotate(-90)">4881 1282</text>
              <text x="0" y="0" transform="translate(563 650) rotate(-90)">485 320</text>
              <text x="523" y="691" fill="#f00">1650</text>
            </g>
          </svg>
        </div>
        <div className="ml-[3px] flex w-[17px] shrink-0 flex-col items-center bg-[#f0f0f0]">
          <ChevronUp size={13} strokeWidth={2.6} className="mt-[3px] text-[#555]" />
          <div className="mt-[2px] h-[19px] w-full bg-[#cdcdcd]" />
          <ChevronDown size={13} strokeWidth={2.6} className="mt-auto mb-[3px] text-[#555]" />
        </div>
      </div>
      <div className="flex h-[17px] items-center bg-[#f0f0f0]">
        <ChevronLeft size={13} strokeWidth={2.6} className="ml-[2px] shrink-0 text-[#555]" />
        <div className="ml-[2px] h-full w-[747px] shrink-0 bg-[#cdcdcd]" />
        <ChevronRight size={13} strokeWidth={2.6} className="ml-auto mr-[20px] shrink-0 text-[#555]" />
      </div>
    </div>
  </div>
);

const NavBtn = ({ t, className }: { t: string; className?: string }) => (
  <div className={clsx('flex w-[167px] items-center justify-center border border-[#a0a0a0] bg-[#f0f0f0] text-[12px] text-[#111]', className)}>{t}</div>
);

const B = '#1f5fb0';
const treeIcons: Record<string, React.ReactNode> = {
  beam: <><path d="M1 1h14l-3 5H6v9H4V6z" fill="#9cc8ec" stroke={B} /><path d="M6 6h6v3H6z" fill="#fff" stroke={B} /></>,
  ring: <path d="M4 2h11l-3 13H1zM6 4l-2 9h6l2-9z" fill="#bcd6f0" stroke={B} fillRule="evenodd" />,
  slab: <path d="M4 1h11l-3 14H1z" fill="#cfe2f5" stroke={B} strokeWidth="1.3" />,
  spiral: <path d="M15 2C6 1 2 5 6 7s8 1 6 4-7 3-11 3c5 1 12 1 14-3S9 6 7 5s3-2 8-1z" fill="#3d8fdc" stroke={B} />,
  cap: <><path d="M0 2h16v3H0z" fill="#999" /><path d="M5 5h6v3H5zM6 8h4v5H6z" fill="#fff" stroke={B} /></>,
  hole: <><path d="M3 1h12l-2 14H1z" fill="#cfe2f5" stroke={B} /><ellipse cx="8" cy="7" rx="4" ry="2.500" fill="#fff" stroke={B} /></>,
  grid: <><path d="M1 1h14v14H1z" fill="#dcebf8" stroke={B} /><path d="M8 1v14M1 8h14" stroke={B} /></>,
  gridS: <><path d="M1 1h14v14H1z" fill="#dcebf8" stroke={B} /><path d="M8 3v10M3 8a5 5 0 0010 0" stroke={B} fill="none" /></>,
  band: <><path d="M1 2h14M1 14h14M5 2v12M11 2v12" stroke={B} /><path d="M1 5h14v6H1z" fill="#cfe2f5" /><path d="M5 2v12M11 2v12" stroke={B} /></>,
  fbeam: <><path d="M1 15l5-9 9-5v14z" fill="#8fc0ea" stroke={B} /><path d="M6 6v9M11 4v11" stroke="#fff" strokeWidth="2" /></>,
  raft: <><path d="M1 1h14v14H1z" fill="#fff" stroke={B} strokeWidth="1.4" /><path d="M5 1v14M11 1v14M1 5h14M1 11h14" stroke={B} strokeWidth="1.4" /></>,
  pit: <><path d="M0 2l4 1 1 7h6l1-7 4-1" fill="none" stroke={B} strokeWidth="1.4" /><path d="M3 12l2 3h6l2-3" fill="#cfe2f5" stroke={B} strokeDasharray="1 1" /></>,
  pier: <><path d="M7 2h2l3 6H4z" fill="#cfe2f5" stroke={B} /><path d="M0 10h16v4H0z" fill="#999" /></>,
  iso: <><path d="M1 10l6-4 8 4-7 5z" fill="#cfe2f5" stroke={B} /><path d="M5 1h6v7H5z" fill="#3d7fc4" stroke={B} /></>,
  pilecap: <><path d="M1 1h14l-2 5H3z" fill="#cfe2f5" stroke={B} strokeWidth="1.3" /><path d="M6 7h4v5l-2 3-2-3z" fill="#3d8fdc" stroke={B} /></>,
  pile: <><path d="M6 1h4v4l2 1v3l-3 1v3l-1 2-1-2v-3L4 9V6l2-1z" fill="#fff" stroke={B} /></>,
  x: <path d="M3 3l10 10M13 3L3 13" stroke={B} strokeWidth="1.6" />,
  rect: <><rect x="2" y="2" width="12" height="12" fill="none" stroke={B} strokeWidth="1.4" /><path d="M0 0h3v3H0zM13 0h3v3h-3zM0 13h3v3H0zM13 13h3v3h-3z" fill="#3a8ee0" /></>,
  hatch: <path d="M1 7l6-6M1 12L12 1M2 15L15 2M7 15l8-8M12 15l3-3" stroke={B} />,
  dimT: <><path d="M0 3h16M0 0v6M16 0v6M8 0v6" stroke="#222" /></>,
};

type T = { t: string; k?: 'open' | 'closed'; i?: string; last?: boolean; sel?: boolean };
const tree: T[] = [
  { t: '梁(L)', i: 'beam' }, { t: '圈梁(E)', i: 'ring', last: true },
  { t: '板', k: 'open' },
  { t: '现浇板(B)', i: 'slab' }, { t: '螺旋板(B)', i: 'spiral' }, { t: '柱帽(V)', i: 'cap' }, { t: '板洞(N)', i: 'hole' }, { t: '板受力筋(S)', i: 'gridS' }, { t: '板负筋(F)', i: 'grid' }, { t: '楼层板带(H)', i: 'band', last: true },
  { t: '基础', k: 'open' },
  { t: '基础梁(F)', i: 'fbeam' }, { t: '筏板基础(M)', i: 'raft' }, { t: '集水坑(K)', i: 'pit' }, { t: '柱墩(Y)', i: 'pier' }, { t: '筏板主筋(R)', i: 'gridS' }, { t: '筏板负筋(X)', i: 'grid' }, { t: '独立基础(P)', i: 'iso' }, { t: '条形基础(T)', i: 'fbeam' }, { t: '桩承台(V)', i: 'pilecap' }, { t: '承台梁(F)', i: 'fbeam' }, { t: '桩(U)', i: 'pile' }, { t: '基础板带(W)', i: 'band', last: true },
  { t: '其它', k: 'closed' },
  { t: '自定义', k: 'open' },
  { t: '自定义点', i: 'x' }, { t: '自定义线(X)', i: 'rect', sel: true }, { t: '自定义面', i: 'hatch' }, { t: '尺寸标注(W)', i: 'dimT', last: true },
  { t: '', k: 'closed' },
];

const Folder = ({ open }: { open: boolean }) => (
  <svg width="16" height="14" viewBox="0 0 16 14" className="shrink-0">
    <path d="M1 2h5l1 2h7v9H1z" fill="#e9c25f" stroke="#a08030" />
    {open ? <path d="M4 6h11l-2 7H1z" fill="#fbe7a8" stroke="#a08030" /> : <path d="M1 5h13v8H1z" fill="#f5d774" stroke="#a08030" />}
  </svg>
);

const Tree = () => (
  <div className="relative mt-[2px] h-[486px] w-[167px] overflow-hidden border-2 border-[#a8a8a8] bg-white">
    <div className="-mt-px">
      {tree.map((r, i) => (
        <div key={i} className="relative flex h-[16px] items-center">
          <span className="absolute left-[13px] top-0 h-full border-l border-dotted border-[#777]" />
          {r.k ? (
            <>
              {r.k === 'open'
                ? <ChevronDown size={11} strokeWidth={3} className="absolute left-[8px] top-[2px] bg-white text-[#555]" />
                : <ChevronRight size={11} strokeWidth={3} className="absolute left-[8px] top-[2px] bg-white text-[#aaa]" />}
              <span className="absolute left-[19px] top-[8px] w-[5px] border-t border-dotted border-[#777]" />
              <div className="ml-[24px] flex items-center gap-[5px]"><Folder open={r.k === 'open'} /><Sim t={r.t} className="text-[#111]" /></div>
            </>
          ) : (
            <>
              <span className={clsx('absolute left-[32px] top-0 border-l border-dotted border-[#777]', r.last ? 'h-[8px]' : 'h-full')} />
              <span className="absolute left-[32px] top-[8px] w-[11px] border-t border-dotted border-[#777]" />
              <div className={clsx('ml-[41px] flex h-[16px] items-center gap-[4px] pl-[3px]', r.sel && 'w-[90px] bg-[#d4d4d4]')}>
                <S>{treeIcons[r.i as string]}</S>
                <Sim t={r.t} className="text-[#111]" />
              </div>
              {r.sel && (
                <svg width="15" height="14" viewBox="0 0 15 14" className="shrink-0">
                  <rect x=".5" y=".5" width="14" height="13" fill="#fff" stroke="#2a7be0" />
                  <path d="M3 3h2v8H3zM7 3h2v8H7zM11 3h2v8h-2z" fill="#2a7be0" />
                </svg>
              )}
            </>
          )}
        </div>
      ))}
    </div>
    <svg width="18" height="24" viewBox="0 0 18 24" className="absolute left-[48px] top-[448px]">
      <path d="M2 1v17l4-4 3 8 3-1-3-8h6z" fill="#bbb" stroke="#888" />
    </svg>
    <div className="absolute bottom-0 right-0 top-0 flex w-[16px] flex-col items-center bg-[#f0f0f0]">
      <ChevronUp size={13} strokeWidth={2.6} className="mt-[2px] text-[#555]" />
      <div className="mt-[218px] h-[209px] w-full bg-[#cdcdcd]" />
      <ChevronDown size={13} strokeWidth={2.6} className="mt-[8px] text-[#555]" />
    </div>
    <div className="absolute bottom-0 left-0 right-0 flex h-[16px] items-center bg-[#f0f0f0]">
      <ChevronLeft size={13} strokeWidth={2.6} className="ml-[4px] text-[#555]" />
      <div className="ml-[2px] h-full w-[107px] bg-[#cdcdcd]" />
      <ChevronRight size={13} strokeWidth={2.6} className="ml-[6px] text-[#555]" />
    </div>
  </div>
);

const LeftPanel = () => (
  <div className="w-[168px] shrink-0">
    <div className="flex h-[16px] items-center bg-[#0a5fe0] text-[12px] leading-none text-white">
      <span className="w-[64px] whitespace-nowrap tracking-[1px]">模块导航栏</span>
      <svg width="8" height="11" viewBox="0 0 8 11" className="ml-[74px]"><path d="M2 0h4v5h2v1H5v5H3V6H0V5h2z" fill="#fff" /></svg>
      <svg width="8" height="8" viewBox="0 0 9 9" className="ml-[10px]"><path d="M0 0l9 9M9 0L0 9" stroke="#fff" /></svg>
    </div>
    <NavBtn t="工程设置" className="h-[22px]" />
    <NavBtn t="绘图输入" className="mt-px h-[22px]" />
    <div className="mt-[2px] flex h-[24px] w-[167px] items-center gap-[7px] border-t-2 border-[#c4c4c4] bg-white pl-[7px]">
      <svg width="16" height="16" viewBox="0 0 16 16"><path d="M3.500 0v7M0 3.500h7M12 9v7M8.500 12.500h7" stroke="#0c5050" strokeWidth="2.500" /></svg>
      <svg width="16" height="14" viewBox="0 0 16 14"><path d="M0 3h8M8 10h8" stroke="#0c5050" strokeWidth="2.500" /></svg>
    </div>
    <Tree />
    <NavBtn t="单构件输入" className="mt-[2px] h-[22px]" />
    <NavBtn t="报表预览" className="mt-px h-[22px]" />
  </div>
);

const Status = () => {
  const cell = 'flex h-full items-center border border-[#dcdcdc] bg-[#f8f8f8] pl-[2px]';
  return (
    <div className="flex h-[20px] gap-[2px] bg-[#f0f0f0] text-[#111]">
      <div className={clsx(cell, 'w-[148px]')}><Sim t="X=55856 Y=-9777" /></div>
      <div className={clsx(cell, 'w-[78px]')}><Sim t="层高:2.8m" /></div>
      <div className={clsx(cell, 'w-[98px]')}><Sim t="底标高:20.8m" /></div>
      <div className={clsx(cell, 'w-[48px]')}><Sim t="1(2)" /></div>
      <div className={clsx(cell, 'w-[912px]')}><Sim t="按鼠标左键指定第一个角点，或拾取构件图元" /></div>
      <div className={clsx(cell, 'flex-1')}><Sim t="601.9 FPS" /></div>
    </div>
  );
};

const App2 = ({ children, className, run }: { children: React.ReactNode; className?: string; run?: boolean }) => (
  <div className={clsx('relative flex h-full w-[45px] shrink-0 items-center justify-center', className)}>
    {children}
    {run && <span className="absolute bottom-0 left-[2px] right-[3px] h-[2px] bg-[#76b9ed]" />}
  </div>
);

const Taskbar = () => (
  <div className="flex h-[40px] items-center bg-[#07131a] text-white">
    <div className="flex h-full w-[48px] shrink-0 items-center justify-center bg-black">
      <svg width="16" height="16" viewBox="0 0 16 16"><path d="M0 2.300l6.500-.9v6.200H0zM7.300 1.300L16 0v7.600H7.300zM0 8.400h6.500v6.200L0 13.700zM7.300 8.400H16V16l-8.700-1.200z" fill="#fff" /></svg>
    </div>
    <div className="flex h-full w-[344px] shrink-0 items-center bg-[#3a3a3a] pl-[9px]">
      <span className="h-[20px] w-[20px] rounded-full border-[3px] border-white" />
      <span className="ml-[7px] text-[13px] text-[#9a9a9a]">在这里输入你要搜索的内容</span>
      <Mic size={16} className="ml-auto mr-[13px] text-[#9a9a9a]" />
    </div>
    <App2 className="ml-[6px]">
      <svg width="20" height="16" viewBox="0 0 20 16"><path d="M5 1h10v14H5zM3 3H1v10h2M17 3h2v10h-2" fill="none" stroke="#fff" /></svg>
    </App2>
    <App2>
      <svg width="24" height="24" viewBox="0 0 24 24"><path d="M12 12C4 14 2 8 4 3c4-1 8 3 8 9zM12 12c2-8 8-9 13-6-1 4-6 8-13 6zM12 12c8 1 9 7 7 11-5 1-8-4-7-11zM12 12c-1 8-7 9-11 7 0-5 4-8 11-7z" fill="#d8d8d8" /></svg>
    </App2>
    <App2 className="w-[52px] pl-[7px]">
      <svg width="26" height="26" viewBox="0 0 28 28"><text x="4" y="22" fontSize="26" fontWeight="700" fontFamily="Liberation Sans" fill="#e4e4e4">e</text><ellipse cx="14" cy="14" rx="13" ry="5" transform="rotate(-40 14 14)" fill="none" stroke="#e4e4e4" strokeWidth="1.4" /></svg>
    </App2>
    <App2 className="w-[50px] pl-[8px]">
      <svg width="22" height="22" viewBox="0 0 22 22"><path d="M17 4A8 8 0 104 16M15 7a5 5 0 10-6 8c4 2 8-1 7-4H10" fill="none" stroke="#999" strokeWidth="1.6" /></svg>
    </App2>
    <App2 className="w-[50px] pl-[8px]">
      <span className="text-[30px] font-bold leading-none text-[#1288e0]">e</span>
    </App2>
    <App2 className="pl-[4px]">
      <svg width="28" height="28" viewBox="0 0 28 28"><text x="4" y="22" fontSize="26" fontWeight="700" fontFamily="Liberation Sans" fill="#2f9be8">e</text><ellipse cx="14" cy="14" rx="13" ry="5" transform="rotate(-40 14 14)" fill="none" stroke="#e8c23a" strokeWidth="1.6" /></svg>
    </App2>
    <App2 className="w-[44px]">
      <svg width="22" height="20" viewBox="0 0 22 20"><path d="M0 2h9l2 2h11v16H0z" fill="#f3c95b" /><path d="M7 12h8v8H7z" fill="#2a8fd8" /><path d="M0 6h22v3H0z" fill="#ffe9a0" /></svg>
    </App2>
    <App2 run className="w-[45px]">
      <svg width="26" height="26" viewBox="0 0 26 26"><circle cx="13" cy="13" r="11" fill="#e8f8d0" stroke="#6cc02c" strokeWidth="3" /><text x="7" y="19" fontSize="18" fontWeight="700" fontFamily="Liberation Sans" fill="#58ae24">e</text></svg>
    </App2>
    <App2 run className="w-[45px]">
      <svg width="24" height="26" viewBox="0 0 24 26"><path d="M22 3C10-1 2 6 2 14s6 11 11 10 9-6 6-11l-7 1 3 3c-3 4-8 1-7-4s6-8 14-6z" fill="#1d8ae6" /></svg>
    </App2>
    <App2 run className="w-[45px] bg-[#3b4348]">
      <svg width="24" height="24" viewBox="0 0 24 24"><rect width="24" height="24" rx="4" fill="#0f8cf0" /><path d="M12 4v10M4 11h4M16 11h4M8 11a4 4 0 108 0M12 15v5" fill="none" stroke="#fff" strokeWidth="2.2" /></svg>
    </App2>
    <App2 run className="w-[45px]">
      <svg width="24" height="24" viewBox="0 0 24 24"><rect width="24" height="24" rx="2" fill="#f2a92a" /><path d="M6 6h12v13H6z" fill="#fff3d0" /><path d="M8 10h8M8 13h8M8 16h5" stroke="#a07a30" /><path d="M14 14L22 2" stroke="#c03a1c" strokeWidth="2" /></svg>
    </App2>
    <span className="ml-[13px] w-[26px] shrink-0 text-[12px] text-[#d0d0d0]">链接</span>
    <div className="ml-[13px] flex w-[58px] shrink-0 flex-col items-center text-[12px] leading-[20px] text-[#e0e0e0]">
      <span>54%</span><span className="whitespace-nowrap">CPU使用</span>
    </div>
    <ChevronUp size={16} className="ml-[15px] shrink-0" />
    <Bell size={15} fill="#fff" className="ml-[8px] shrink-0" />
    <svg width="16" height="14" viewBox="0 0 16 14" className="ml-[8px] shrink-0"><path d="M5 5h10v8H5z" fill="none" stroke="#fff" /><path d="M6 6h6v6H6z" fill="#fff" /><path d="M2 1v4M0 5h4" stroke="#fff" /></svg>
    <Wifi size={15} className="ml-[9px] shrink-0 -rotate-45 text-[#c8c8c8]" />
    <Volume1 size={17} className="ml-[6px] shrink-0" />
    <Keyboard size={24} strokeWidth={1.2} className="ml-[6px] shrink-0" />
    <span className="ml-[8px] shrink-0 text-[13px]">中</span>
    <svg width="16" height="18" viewBox="0 0 16 18" className="ml-[12px] shrink-0"><path d="M2 1h12l1 14-13 2-1-7z" fill="#f0501e" /><path d="M11 5H6v3h4v4H4" fill="none" stroke="#fff" strokeWidth="2" /></svg>
    <div className="ml-[13px] flex w-[60px] shrink-0 flex-col items-center text-[12px] leading-[20px]">
      <span>18:04</span><span className="whitespace-nowrap">2018/7/23</span>
    </div>
    <MessageSquare size={17} className="ml-[22px] shrink-0" />
  </div>
);

export default function App() {
  return (
    <div className={clsx('flex h-[768px] w-[1366px] flex-col overflow-hidden bg-[#f0f0f0] text-[#111]', sans)}>
      <TitleBar />
      <MenuBar />
      <TopTools />
      <div className="flex h-[624px]">
        <LeftPanel />
        <div className="ml-[5px] w-[1193px]">
          <Row2 />
          <Row3 />
          <Row4 />
          <Canvas />
          <Row5 />
          <Row6 />
          <RebarTable />
        </div>
      </div>
      <Status />
      <Taskbar />
    </div>
  );
}
